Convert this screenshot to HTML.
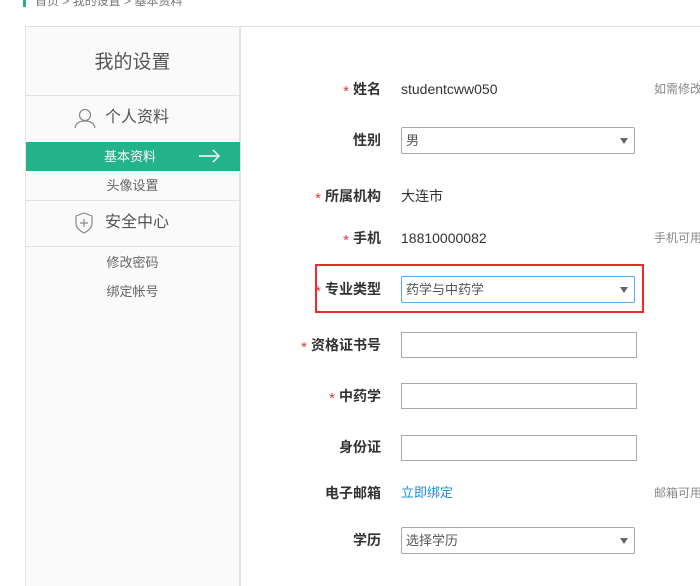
<!DOCTYPE html>
<html><head><meta charset="utf-8"><style>
*{margin:0;padding:0;box-sizing:border-box}
body{width:700px;height:578px;overflow:hidden;background:#fff;font-family:"Liberation Sans","Noto Sans CJK SC",sans-serif;position:relative;color:#333}
.a{position:absolute;white-space:nowrap}
.lbl{position:absolute;right:319px;font-size:14px;font-weight:bold;color:#333;line-height:20px;white-space:nowrap}
.st{color:#e03a3a;font-weight:normal;margin-right:4px;font-size:15px;position:relative;top:2px}
.val{position:absolute;left:401px;font-size:14px;line-height:20px;color:#333;white-space:nowrap}
.sel{position:absolute;left:401px;width:234px;height:27px;border:1px solid #aaa;border-radius:2px;font-size:13px;color:#555;padding:5px 4px;line-height:15px;background:#fff}
.sel:after{content:"";position:absolute;right:6px;top:10px;border:4px solid transparent;border-top:6px solid #666;border-bottom:0}
.inp{position:absolute;left:401px;width:236px;height:26px;border:1px solid #aaa;background:#fff}
.side{color:#666;font-size:13px;text-align:center;width:215px;left:25px}
.hint{position:absolute;left:654px;font-size:12px;color:#888;line-height:20px;white-space:nowrap}
</style></head><body>
<div class="a" style="left:23px;top:0;width:3px;height:7px;background:#22b38b"></div>
<div class="a" style="left:35px;top:-6px;font-size:12px;color:#777;line-height:14px">首页 &gt; 我的设置 &gt; 基本资料</div>
<div class="a" style="left:25px;top:26px;width:675px;height:1px;background:#e2e2e2"></div>
<div class="a" style="left:25px;top:26px;width:216px;height:560px;background:#fafafa;border-left:1px solid #e2e2e2;border-right:2px solid #e2e2e2;border-top:1px solid #e2e2e2"></div>
<div class="a side" style="top:51px;font-size:19px;color:#555;line-height:24px">我的设置</div>
<div class="a" style="left:26px;top:95px;width:214px;height:1px;background:#e2e2e2"></div>
<svg class="a" style="left:74px;top:108px" width="22" height="21" viewBox="0 0 22 21" fill="none" stroke="#888" stroke-width="1.2"><circle cx="11" cy="7" r="5.5"/><path d="M1 20c1-5 5-7 10-7s9 2 10 7"/></svg>
<div class="a" style="left:105px;top:108px;font-size:16px;color:#555;line-height:20px">个人资料</div>
<div class="a" style="left:26px;top:142px;width:214px;height:29px;background:#22b38b"></div>
<div class="a" style="left:104px;top:148px;font-size:13px;color:#fff;line-height:17px">基本资料</div>
<svg class="a" style="left:199px;top:149px" width="22" height="14" viewBox="0 0 22 14" fill="none" stroke="#fff" stroke-width="1.4"><path d="M0 7h20M14 1l6 6-6 6"/></svg>
<div class="a side" style="top:177px;line-height:17px">头像设置</div>
<div class="a" style="left:26px;top:200px;width:214px;height:1px;background:#e2e2e2"></div>
<svg class="a" style="left:74px;top:212px" width="20" height="22" viewBox="0 0 20 22" fill="none" stroke="#888" stroke-width="1.2"><path d="M10 1l8 3v7c0 5-4 8-8 10C6 19 2 16 2 11V4z"/><path d="M10 7v8M6 11h8"/></svg>
<div class="a" style="left:105px;top:213px;font-size:16px;color:#555;line-height:20px">安全中心</div>
<div class="a" style="left:26px;top:246px;width:214px;height:1px;background:#e2e2e2"></div>
<div class="a side" style="top:254px;line-height:17px">修改密码</div>
<div class="a side" style="top:283px;line-height:17px">绑定帐号</div>

<div class="lbl" style="top:79px"><span class="st">*</span>姓名</div>
<div class="val" style="top:79px">studentcww050</div>
<div class="hint" style="top:79px">如需修改</div>
<div class="lbl" style="top:130px">性别</div>
<div class="sel" style="top:127px">男</div>
<div class="lbl" style="top:186px"><span class="st">*</span>所属机构</div>
<div class="val" style="top:186px">大连市</div>
<div class="lbl" style="top:228px"><span class="st">*</span>手机</div>
<div class="val" style="top:228px">18810000082</div>
<div class="hint" style="top:228px">手机可用</div>
<div class="a" style="left:315px;top:264px;width:329px;height:49px;border:2px solid #ee2a2a"></div>
<div class="lbl" style="top:279px"><span class="st">*</span>专业类型</div>
<div class="sel" style="top:276px;border-color:#5aa8e0">药学与中药学</div>
<div class="lbl" style="top:335px"><span class="st">*</span>资格证书号</div>
<div class="inp" style="top:332px"></div>
<div class="lbl" style="top:386px"><span class="st">*</span>中药学</div>
<div class="inp" style="top:383px"></div>
<div class="lbl" style="top:437px">身份证</div>
<div class="inp" style="top:435px"></div>
<div class="lbl" style="top:483px">电子邮箱</div>
<div class="val" style="top:483px;color:#1a8fd8;font-size:13px">立即绑定</div>
<div class="hint" style="top:483px">邮箱可用</div>
<div class="lbl" style="top:530px">学历</div>
<div class="sel" style="top:527px">选择学历</div>
</body></html>
